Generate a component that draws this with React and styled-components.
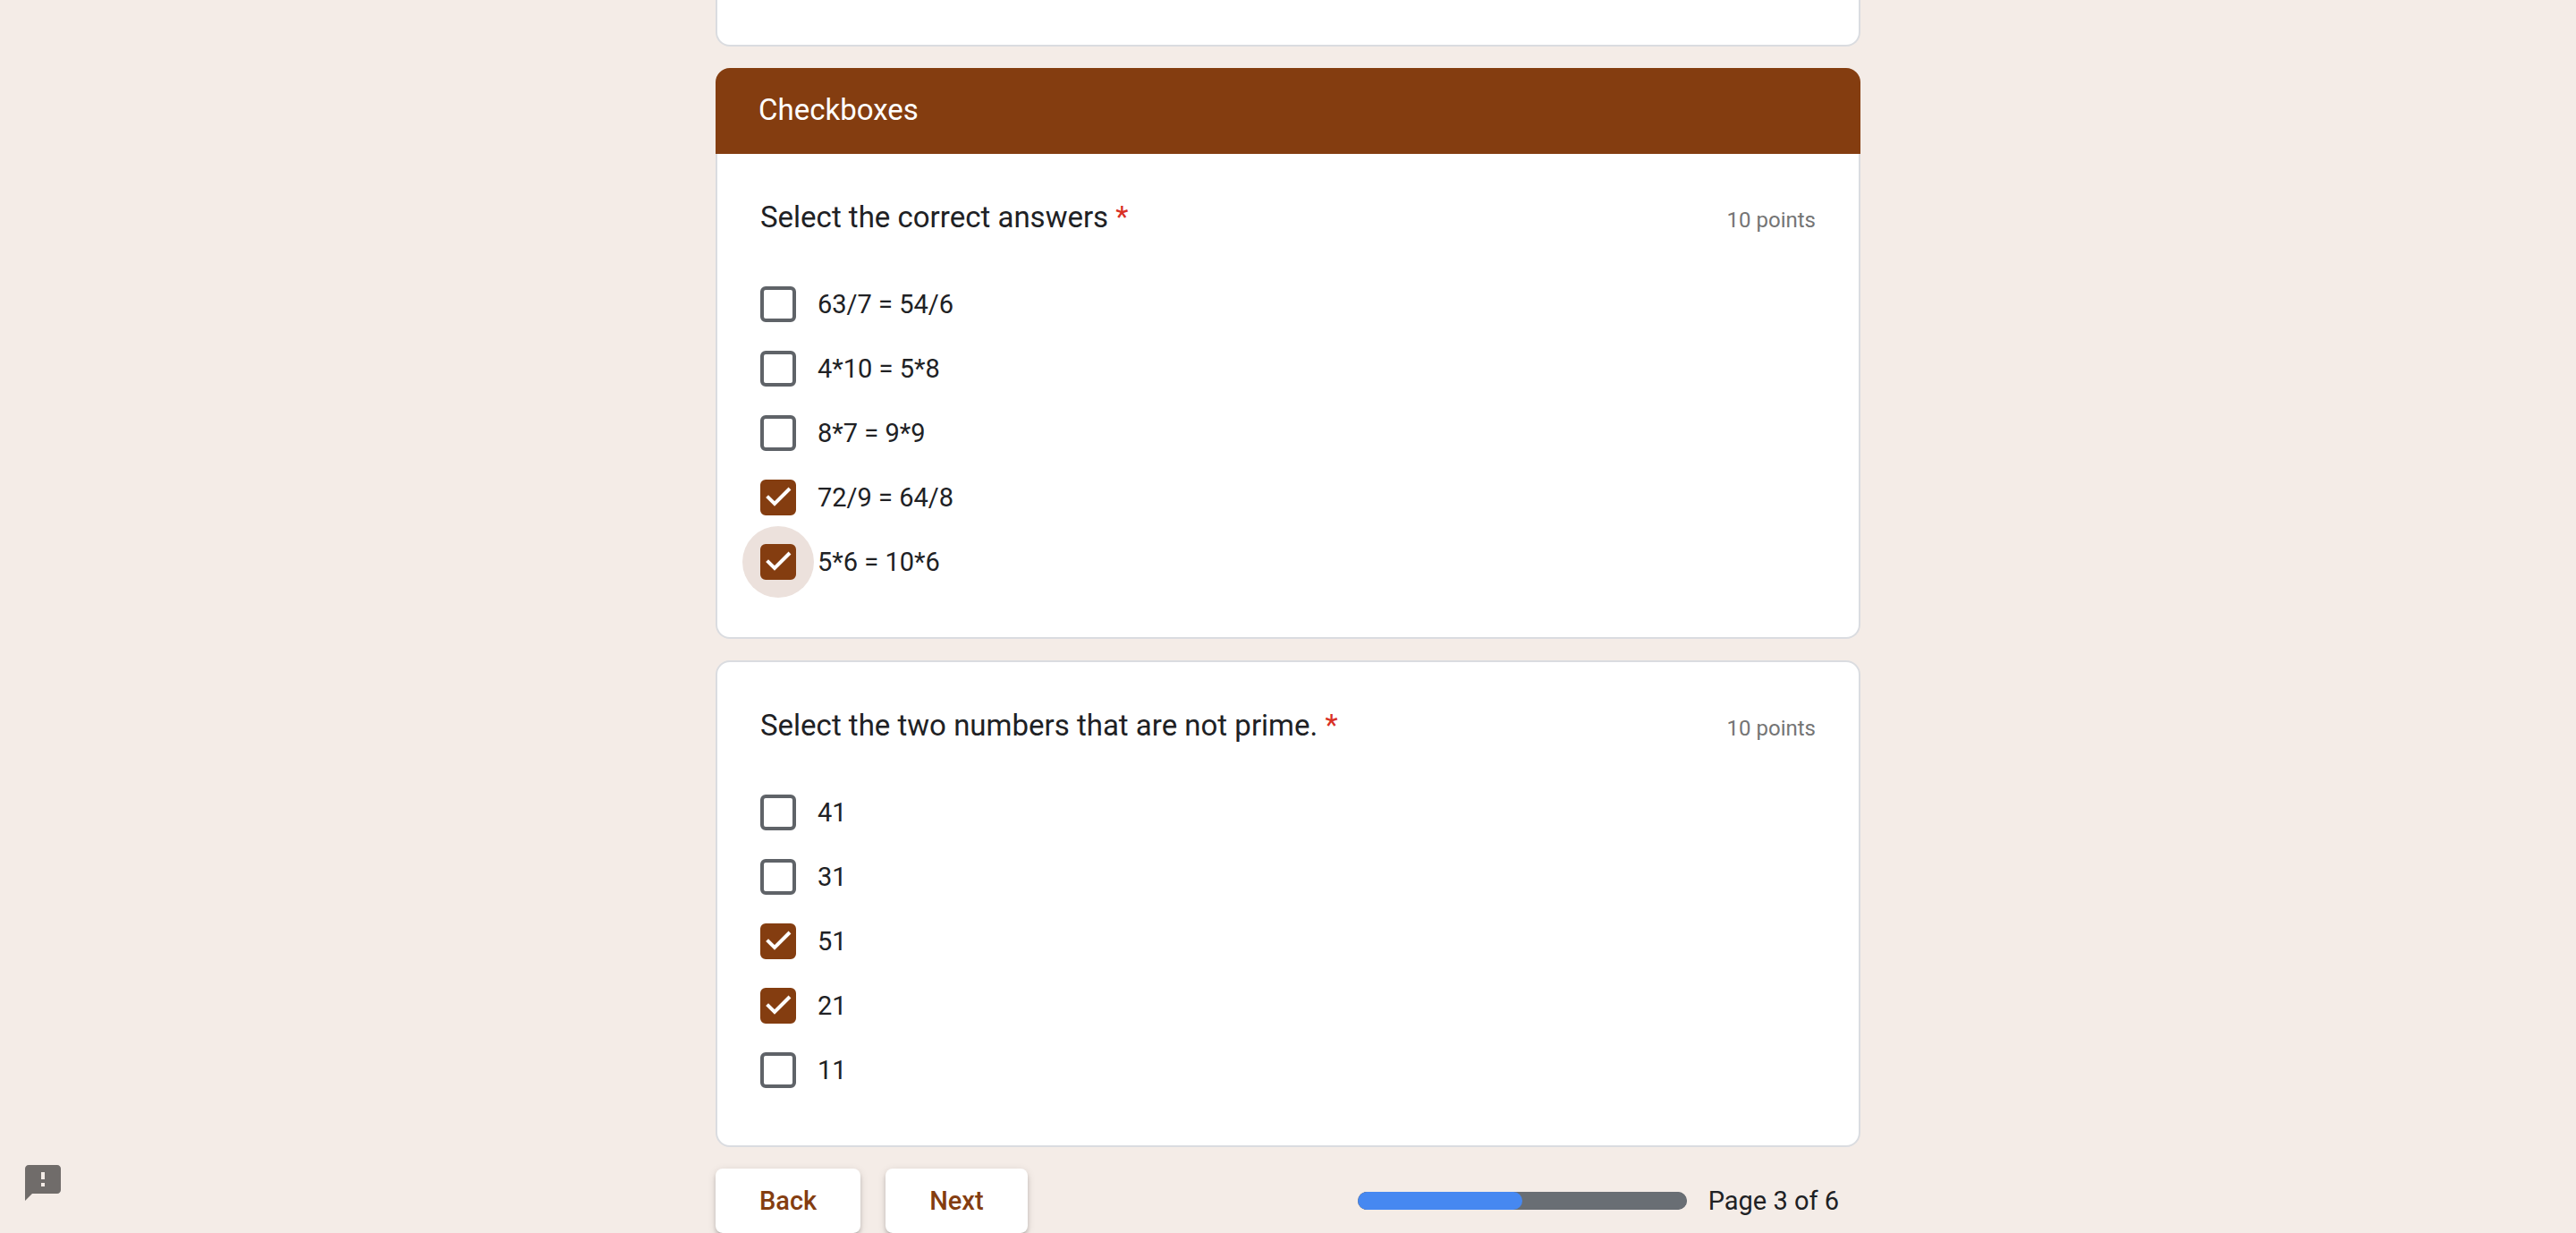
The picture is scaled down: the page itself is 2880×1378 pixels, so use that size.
import React, { useId } from "react";
import styled, { createGlobalStyle, css } from "styled-components";

const color = {
  page: "#f4ece7",
  accent: "#843d10",
  halo: "#ece1dc",
  border: "#dadce0",
  ink: "#202124",
  muted: "#757575",
  control: "#5f6368",
  required: "#d93025",
};

const GlobalStyle = createGlobalStyle`
  *, *::before, *::after { box-sizing: border-box; }
  body {
    margin: 0;
    background: ${color.page};
    color: ${color.ink};
    font-family: Roboto, "Liberation Sans", sans-serif;
    font-size: 29px;
    line-height: 40px;
  }
`;

const Form = styled.form`
  display: flex;
  flex-direction: column;
  gap: 24px;
  max-width: 1280px;
  margin: 0 auto;
`;

const Card = styled.section`
  background: #fff;
  border: 2px solid ${color.border};
  border-radius: 16px;
  padding: 48px;
  ${(p) =>
    p.$continued &&
    css`
      border-top: 0;
      border-top-left-radius: 0;
      border-top-right-radius: 0;
    `}
  ${(p) =>
    p.$tail &&
    css`
      padding: 0 48px 50px;
    `}
`;

const SectionHeader = styled.header`
  padding: 24px 48px 26px;
  border-radius: 16px 16px 0 0;
  background: ${color.accent};
  color: #fff;
`;

const SectionTitle = styled.h2`
  margin: 0;
  font-size: 33px;
  line-height: 46px;
  font-weight: 400;
`;

const QuestionHead = styled.div`
  display: flex;
  align-items: baseline;
  justify-content: space-between;
  margin-bottom: 38px;
`;

const QuestionTitle = styled.h3`
  margin: 0;
  font-size: 33px;
  line-height: 46px;
  font-weight: 400;
`;

const Required = styled.span`
  color: ${color.required};
`;

const Points = styled.span`
  font-size: 24px;
  line-height: 32px;
  color: ${color.muted};
`;

const Options = styled.div`
  display: flex;
  flex-direction: column;
`;

const Option = styled.label`
  display: flex;
  align-items: center;
  gap: 24px;
  min-height: 72px;
`;

const Box = styled.span`
  position: relative;
  display: grid;
  width: 40px;
  height: 40px;
  ${(p) =>
    p.$halo &&
    css`
      &::before {
        content: "";
        position: absolute;
        inset: -20px;
        border-radius: 50%;
        background: ${color.halo};
      }
    `}
`;

const Tick = styled.svg`
  grid-area: 1 / 1;
  z-index: 1;
  width: 40px;
  height: 40px;
  fill: none;
  stroke: #fff;
  stroke-width: 4;
  visibility: hidden;
  pointer-events: none;
`;

const CheckInput = styled.input`
  appearance: none;
  grid-area: 1 / 1;
  z-index: 1;
  width: 40px;
  height: 40px;
  margin: 0;
  border: 4px solid ${color.control};
  border-radius: 6px;
  &:checked {
    border-color: ${color.accent};
    background: ${color.accent};
  }
  &:checked + ${Tick} {
    visibility: visible;
  }
`;

const Answer = styled.span`
  position: relative;
`;

const Footer = styled.footer`
  display: flex;
  align-items: center;
  gap: 28px;
`;

const NavButton = styled.button`
  height: 72px;
  padding: 0 49px;
  border: 0;
  border-radius: 8px;
  background: #fff;
  color: ${color.accent};
  font: 500 29px/40px Roboto, "Liberation Sans", sans-serif;
  box-shadow: 0 6px 2px -4px rgba(0, 0, 0, 0.2), 0 4px 4px rgba(0, 0, 0, 0.14),
    0 2px 10px rgba(0, 0, 0, 0.12);
`;

const Paging = styled.div`
  display: flex;
  align-items: center;
  gap: 24px;
  margin-left: auto;
  margin-right: 24px;
`;

const Meter = styled.progress`
  appearance: none;
  width: 368px;
  height: 20px;
  border: 0;
  border-radius: 10px;
  overflow: hidden;
  background: #696e74;
  &::-webkit-progress-bar {
    background: #696e74;
    border-radius: 10px;
  }
  &::-webkit-progress-value {
    background: #4688f1;
    border-radius: 10px;
  }
`;

const PageLabel = styled.label`
  min-width: 146px;
`;

const Report = styled.button`
  position: fixed;
  left: 24px;
  bottom: 32px;
  display: flex;
  padding: 0;
  border: 0;
  background: none;
  svg {
    width: 48px;
    height: 48px;
    fill: rgba(0, 0, 0, 0.54);
  }
`;

const questions = [
  {
    section: "Checkboxes",
    title: "Select the correct answers",
    options: [
      { text: "63/7 = 54/6" },
      { text: "4*10 = 5*8" },
      { text: "8*7 = 9*9" },
      { text: "72/9 = 64/8", checked: true },
      { text: "5*6 = 10*6", checked: true, halo: true },
    ],
  },
  {
    title: "Select the two numbers that are not prime.",
    options: [
      { text: "41" },
      { text: "31" },
      { text: "51", checked: true },
      { text: "21", checked: true },
      { text: "11" },
    ],
  },
];

function Question({ section, title, options }) {
  const titleId = useId();
  return (
    <div>
      {section && (
        <SectionHeader>
          <SectionTitle>{section}</SectionTitle>
        </SectionHeader>
      )}
      <Card $continued={Boolean(section)} role="group" aria-labelledby={titleId}>
        <QuestionHead>
          <QuestionTitle id={titleId}>
            {title} <Required>*</Required>
          </QuestionTitle>
          <Points>10 points</Points>
        </QuestionHead>
        <Options>
          {options.map((option) => (
            <Option key={option.text}>
              <Box $halo={option.halo}>
                <CheckInput type="checkbox" defaultChecked={option.checked} />
                <Tick viewBox="0 0 40 40" aria-hidden="true">
                  <path d="M7.6 18.6 16 27 33 10" />
                </Tick>
              </Box>
              <Answer>{option.text}</Answer>
            </Option>
          ))}
        </Options>
      </Card>
    </div>
  );
}

export default function App() {
  return (
    <>
      <GlobalStyle />
      <Form>
        <Card $continued $tail />
        {questions.map((question) => (
          <Question key={question.title} {...question} />
        ))}
        <Footer>
          <NavButton type="button">Back</NavButton>
          <NavButton type="button">Next</NavButton>
          <Paging>
            <Meter id="form-progress" value={3} max={6} />
            <PageLabel htmlFor="form-progress">Page 3 of 6</PageLabel>
          </Paging>
        </Footer>
      </Form>
      <Report type="button" aria-label="Report a problem">
        <svg viewBox="0 0 24 24" aria-hidden="true">
          <path d="M20 2H4c-1.1 0-1.99.9-1.99 2L2 22l4-4h14c1.1 0 2-.9 2-2V4c0-1.1-.9-2-2-2zm-7 12h-2v-2h2v2zm0-4h-2V6h2v4z" />
        </svg>
      </Report>
    </>
  );
}
